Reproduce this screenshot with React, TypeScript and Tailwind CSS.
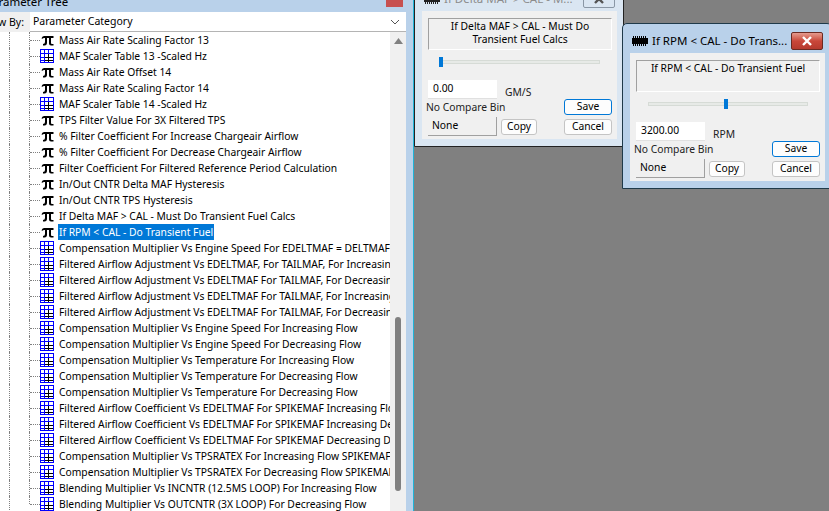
import React from 'react';

const rows: [string, 'pi' | 'table'][] = [
  ['Mass Air Rate Scaling Factor 13', 'pi'],
  ['MAF Scaler Table 13 -Scaled Hz', 'table'],
  ['Mass Air Rate Offset 14', 'pi'],
  ['Mass Air Rate Scaling Factor 14', 'pi'],
  ['MAF Scaler Table 14 -Scaled Hz', 'table'],
  ['TPS Filter Value For 3X Filtered TPS', 'pi'],
  ['% Filter Coefficient For Increase Chargeair Airflow', 'pi'],
  ['% Filter Coefficient For Decrease Chargeair Airflow', 'pi'],
  ['Filter Coefficient For Filtered Reference Period Calculation', 'pi'],
  ['In/Out CNTR Delta MAF Hysteresis', 'pi'],
  ['In/Out CNTR TPS Hysteresis', 'pi'],
  ['If Delta MAF > CAL - Must Do Transient Fuel Calcs', 'pi'],
  ['If RPM < CAL - Do Transient Fuel', 'pi'],
  ['Compensation Multiplier Vs Engine Speed For EDELTMAF = DELTMAF', 'table'],
  ['Filtered Airflow Adjustment Vs EDELTMAF, For TAILMAF, For Increasing Flow', 'table'],
  ['Filtered Airflow Adjustment Vs EDELTMAF For TAILMAF, For Decreasing Flow', 'table'],
  ['Filtered Airflow Adjustment Vs EDELTMAF For TAILMAF, For Increasing Flow', 'table'],
  ['Filtered Airflow Adjustment Vs EDELTMAF For TAILMAF, For Decreasing Flow', 'table'],
  ['Compensation Multiplier Vs Engine Speed For Increasing Flow', 'table'],
  ['Compensation Multiplier Vs Engine Speed For Decreasing Flow', 'table'],
  ['Compensation Multiplier Vs Temperature For Increasing Flow', 'table'],
  ['Compensation Multiplier Vs Temperature For Decreasing Flow', 'table'],
  ['Compensation Multiplier Vs Temperature For Decreasing Flow', 'table'],
  ['Filtered Airflow Coefficient Vs EDELTMAF For SPIKEMAF Increasing Flow', 'table'],
  ['Filtered Airflow Coefficient Vs EDELTMAF For SPIKEMAF Increasing Decreasing', 'table'],
  ['Filtered Airflow Coefficient Vs EDELTMAF For SPIKEMAF Decreasing Decreasing', 'table'],
  ['Compensation Multiplier Vs TPSRATEX For Increasing Flow SPIKEMAF', 'table'],
  ['Compensation Multiplier Vs TPSRATEX For Decreasing Flow SPIKEMAF', 'table'],
  ['Blending Multiplier Vs INCNTR (12.5MS LOOP) For Increasing Flow', 'table'],
  ['Blending Multiplier Vs OUTCNTR (3X LOOP) For Decreasing Flow', 'table'],
];

const PiIcon = () => (
  <svg width="14" height="14" viewBox="0 0 14 14" className="shrink-0">
    <path d="M1.5 5.5 Q2 3 4 3 H13.5 V5 H11 V10 Q11 11 12 11 H13.5 V12.5 H11 Q9 12.5 9 10.5 V5 H7 V9.5 Q7 12.5 4.5 12.5 H3 V11 Q5 11 5 9 V5 H4 Q3 5 2.5 5.8 Z" fill="#000" />
  </svg>
);

const TableIcon = () => (
  <svg width="14" height="14" viewBox="0 0 14 14" className="shrink-0" shapeRendering="crispEdges">
    <rect x="0" y="0" width="14" height="14" fill="#0000ff" />
    <rect x="1" y="1" width="12" height="12" fill="#fff" />
    <rect x="1" y="4" width="12" height="1" fill="#0000ff" />
    <rect x="4" y="1" width="1" height="12" fill="#0000ff" />
    <rect x="5" y="8" width="8" height="1" fill="#000" />
    <rect x="5" y="11" width="8" height="1" fill="#000" />
    <rect x="8" y="5" width="1" height="8" fill="#000" />
    <rect x="1" y="8" width="3" height="1" fill="#0000ff" />
    <rect x="1" y="11" width="3" height="1" fill="#0000ff" />
    <rect x="8" y="1" width="1" height="3" fill="#0000ff" />
  </svg>
);

const ChipIcon = ({ dim }: { dim?: boolean }) => (
  <svg width="16" height="10" viewBox="0 0 16 10" className="shrink-0" shapeRendering="crispEdges">
    <rect x="0" y="2" width="16" height="6" fill={dim ? '#222' : '#000'} />
    <path d="M1.5 0V10M3.5 0V10M5.5 0V10M7.5 0V10M9.5 0V10M11.5 0V10M13.5 0V10" stroke={dim ? '#222' : '#000'} strokeWidth="1" />
  </svg>
);

const CloseGlyph = ({ color }: { color: string }) => (
  <svg width="12" height="10" viewBox="0 0 12 10"><path d="M2 1l8 8M10 1l-8 8" stroke={color} strokeWidth="2.4" /></svg>
);

const Row = ({ text, kind, selected, last }: { text: string; kind: 'pi' | 'table'; selected: boolean; last: boolean }) => (
  <div className="flex h-4 w-max items-center whitespace-nowrap">
    <span className="ml-[9px] h-full w-[1px] shrink-0 border-l border-dotted border-[#808080]" />
    <span className="ml-[19px] flex h-full w-[1px] shrink-0 flex-col">
      <span className={`border-l border-dotted border-[#808080] ${last ? 'h-2' : 'h-full'}`} />
    </span>
    <span className="w-[10px] shrink-0 border-t border-dotted border-[#808080]" />
    {kind === 'pi' ? <PiIcon /> : <TableIcon />}
    <span className={`ml-[4px] shrink-0 px-[1px] leading-4 ${selected ? 'bg-[#0078d7] text-white' : 'text-black'}`}>{text}</span>
  </div>
);

const Btn = ({ label, primary, className }: { label: string; primary?: boolean; className: string }) => (
  <div className={`flex h-[16px] items-center justify-center rounded-[3px] bg-[#fdfdfd] text-black ${primary ? 'border border-[#0078d7]' : 'border border-[#c4c4c4]'} ${className}`}>
    {label}
  </div>
);

const Dialog = ({ title, text, value, unit, thumb, active, className }: {
  title: string; text: React.ReactNode; value: string; unit: string; thumb: string; active: boolean; className: string;
}) => (
  <div className={`absolute flex w-[210px] flex-col overflow-hidden rounded-t-[5px] border pb-[7px] pl-[7px] pr-[6px] ${active ? 'border-[#1f3a4a] bg-[#b9d1ea]' : 'border-[#222] bg-[#dae6f2]'} ${className}`}>
    <div className="flex h-[29px] shrink-0 items-center pt-[5px]">
      <span className="ml-[2px]"><ChipIcon dim={!active} /></span>
      <span className={`ml-[4px] flex-1 whitespace-nowrap text-[11.5px] ${active ? 'text-black' : 'text-[#8c8c8c]'}`}>{title}</span>
      {active ? (
        <span className="mr-[2px] flex h-[18px] w-[32px] items-center justify-center rounded-[2px] border border-[#6b2a22] bg-gradient-to-b from-[#e49a8e] via-[#c9473a] to-[#b53a2e]"><CloseGlyph color="#fff" /></span>
      ) : (
        <span className="mr-[2px] flex h-[18px] w-[32px] items-center justify-center rounded-[2px] border border-[#8a97a5]"><CloseGlyph color="#555" /></span>
      )}
    </div>
    <div className="flex h-[128px] flex-col bg-[#f0f0f0] pl-[6px] pr-[5px] pt-[7px]">
      <div className="h-[32px] w-[184px] border border-[#a0a0a0] border-b-white border-r-white pt-[1px] text-center leading-[13px] text-black">{text}</div>
      <div className="relative ml-[12px] mt-[10px] h-[4px] w-[160px] border border-[#d6dbd6] bg-[#e7eae7]">
        <span className={`absolute top-[-4px] h-[10px] w-[4px] bg-[#0078d7] ${thumb}`} />
      </div>
      <div className="mt-[16px] flex h-[19px]">
        <div className="flex w-[69px] items-center border-b border-[#e0e0e0] bg-white pl-[5px] text-black">{value}</div>
        <span className="ml-[8px] mt-[5px] text-[#222]">{unit}</span>
      </div>
      <div className="flex">
        <div className="flex w-[136px] flex-col">
          <span className="ml-[-2px] h-[18px] leading-[16px] text-[#222]">No Compare Bin</span>
          <div className="flex">
            <div className="flex h-[19px] w-[69px] items-center border-b border-r border-[#a0a0a0] bg-[#f0f0f0] pl-[4px] text-black">None</div>
            <Btn label="Copy" className="ml-[4px] mt-[2px] w-[36px]" />
          </div>
        </div>
        <div className="flex flex-col">
          <Btn label="Save" primary className="w-[48px]" />
          <Btn label="Cancel" className="mt-[4px] w-[48px]" />
        </div>
      </div>
    </div>
  </div>
);

export default function App() {
  return (
    <div className="relative h-[511px] w-[829px] overflow-hidden bg-[#808080] text-[10.3px] [font-family:'Noto_Sans','Liberation_Sans',sans-serif]">
      {/* main window, cut off at the screen edge */}
      <div className="flex h-full w-[414px] flex-col border-r border-[#1fb4d8] bg-[#b9d1ea] pr-[7px]">
        <div className="flex h-[12px] shrink-0 overflow-hidden">
          <span className="ml-[-15px] mt-[-7px] flex-1 whitespace-nowrap text-[11.5px] text-black">Parameter Tree</span>
          <span className="mr-[3px] h-[7px] w-[17px] bg-[#c75050]" />
        </div>
        <div className="flex h-[20px] shrink-0 items-center bg-[#f0f0f0] text-[10.5px]">
          <div className="flex w-[30px] shrink-0 justify-end overflow-hidden pr-[6px] pt-[1px]">
            <span className="shrink-0 whitespace-nowrap text-black">View By:</span>
          </div>
          <div className="flex h-full flex-1 items-center justify-between border-b border-[#b4b4b4] bg-white pl-[3px] pr-[6px] pt-[1px] text-black">
            <span>Parameter Category</span>
            <svg width="10" height="6" viewBox="0 0 10 6"><path d="M1 1l4 4 4-4" fill="none" stroke="#555" strokeWidth="1" /></svg>
          </div>
        </div>
        <div className="flex min-h-0 flex-1">
          <div className="min-w-0 flex-1 overflow-hidden bg-white">
            {rows.map(([text, kind], i) => (
              <Row key={i} text={text} kind={kind} selected={i === 12} last={i === rows.length - 1} />
            ))}
          </div>
          <div className="flex w-[16px] shrink-0 flex-col items-center bg-[#f0f0f0]">
            <svg width="9" height="6" viewBox="0 0 9 6" className="mt-[6px]"><path d="M4.5 0L9 6H0z" fill="#808080" /></svg>
            <span className="mt-[273px] h-[174px] w-[6px] rounded-[3px] bg-[#808080]" />
          </div>
        </div>
      </div>

      <Dialog
        className="left-[414px] top-[-19px]"
        title="If Delta MAF > CAL - M..."
        text={<>If Delta MAF &gt; CAL - Must Do<br />Transient Fuel Calcs</>}
        value="0.00"
        unit="GM/S"
        thumb="left-[-2px]"
        active={false}
      />
      <Dialog
        className="left-[622px] top-[23px]"
        title="If RPM < CAL - Do Trans..."
        text="If RPM < CAL - Do Transient Fuel"
        value="3200.00"
        unit="RPM"
        thumb="left-[75px]"
        active
      />
    </div>
  );
}
